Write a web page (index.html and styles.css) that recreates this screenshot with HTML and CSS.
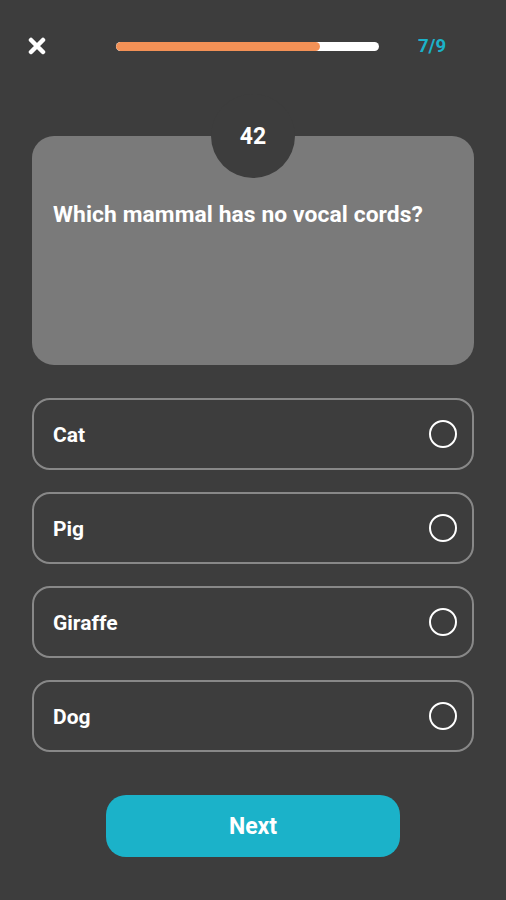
FILE: index.html
```html
<!DOCTYPE html>
<html lang="en">
<head>
  <meta charset="UTF-8" />
  <meta name="viewport" content="width=device-width, initial-scale=1.0" />
  <title>Quiz</title>
  <link rel="stylesheet" href="styles.css">
</head>
<body>
  <header class="top">
    <button class="close" aria-label="close">
      <svg width="18" height="18" viewBox="0 0 18 18">
        <path d="M3 3 L15 15 M15 3 L3 15" stroke="#fff" stroke-width="4.5" stroke-linecap="round"/>
      </svg>
    </button>
    <div class="progress"><div class="progress-fill" style="width: 77.5%"></div></div>
    <span class="count">7/9</span>
  </header>

  <section class="card">
    <div class="notch">42</div>
    <p class="question">Which mammal has no vocal cords?</p>
  </section>

  <ul class="options">
    <li class="option"><span>Cat</span><i class="radio"></i></li>
    <li class="option"><span>Pig</span><i class="radio"></i></li>
    <li class="option"><span>Giraffe</span><i class="radio"></i></li>
    <li class="option"><span>Dog</span><i class="radio"></i></li>
  </ul>

  <div class="footer">
    <button class="next">Next</button>
  </div>
</body>
</html>
```

FILE: styles.css
```css
html, body {
  margin: 0;
  padding: 0;
}
body {
  width: 506px;
  height: 900px;
  background: #3d3d3d;
  font-family: Roboto, "Liberation Sans", sans-serif;
  color: #fff;
  overflow: hidden;
}
.top {
  display: flex;
  align-items: center;
  height: 92px;
  padding: 0 0 0 28px;
  box-sizing: border-box;
}
.close {
  width: 18px;
  height: 18px;
  padding: 0;
  border: none;
  background: none;
  display: flex;
}
.progress {
  width: 263px;
  height: 9px;
  margin-left: 70px;
  background: #fff;
  border-radius: 5px;
  overflow: hidden;
}
.progress-fill {
  height: 100%;
  background: #f39156;
  border-radius: 5px;
}
.count {
  margin-left: 39px;
  color: #1bb2c9;
  font-weight: bold;
  font-size: 18.5px;
}
.card {
  position: relative;
  margin: 44px 32px 0;
  height: 229px;
  background: #7a7a7a;
  border-radius: 22px;
}
.notch {
  position: absolute;
  left: 50%;
  top: -42px;
  width: 84px;
  height: 84px;
  margin-left: -42px;
  border-radius: 50%;
  background: #3d3d3d;
  display: flex;
  justify-content: center;
  padding-top: 29px;
  box-sizing: border-box;
  font-weight: bold;
  font-size: 23px;
}
.question {
  margin: 0;
  padding: 65px 21px 0;
  font-weight: bold;
  font-size: 22.8px;
  letter-spacing: 0.1px;
}
.options {
  list-style: none;
  margin: 33px 32px 0;
  padding: 0;
  display: flex;
  flex-direction: column;
  gap: 22px;
}
.option {
  height: 72px;
  box-sizing: border-box;
  border: 2px solid #888;
  border-radius: 18px;
  display: flex;
  align-items: center;
  justify-content: space-between;
  padding: 2px 15px 0 19px;
  font-weight: bold;
  font-size: 21px;
}
.radio {
  width: 24px;
  height: 24px;
  margin-top: -2px;
  border: 2.5px solid #fff;
  border-radius: 50%;
}
.footer {
  display: flex;
  justify-content: center;
  margin-top: 43px;
}
.next {
  width: 294px;
  height: 62px;
  border: none;
  border-radius: 20px;
  background: #1bb2c9;
  color: #fff;
  font-family: Roboto, "Liberation Sans", sans-serif;
  font-weight: bold;
  font-size: 23px;
}
```
